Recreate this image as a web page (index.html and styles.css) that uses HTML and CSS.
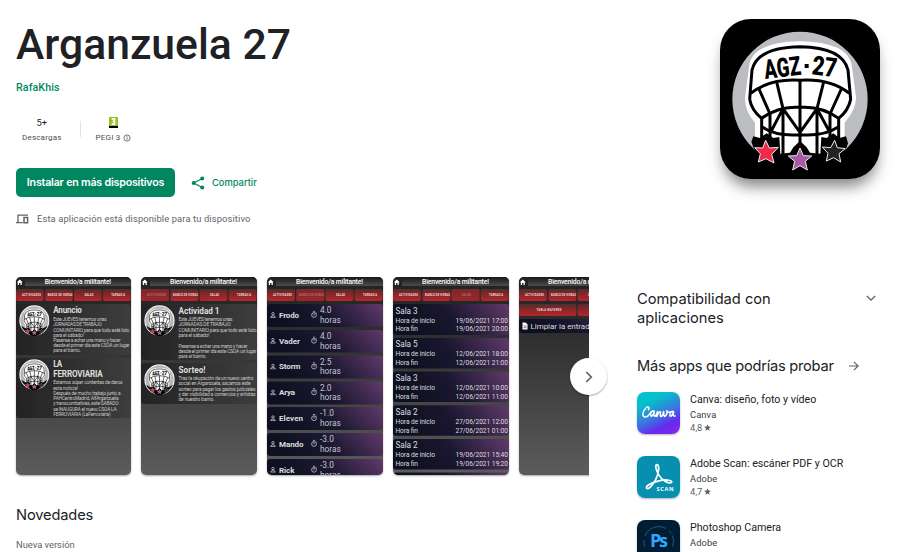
FILE: index.html
```html
<!DOCTYPE html>
<html lang="es">
<head>
<meta charset="utf-8">
<title>Arganzuela 27</title>
<link rel="stylesheet" href="styles.css">
</head>
<body>
<svg class="defs" width="0" height="0" aria-hidden="true">
  <defs>
    <linearGradient id="bg" x1="0" y1="0" x2="0" y2="1"><stop offset="0" stop-color="#222"/><stop offset=".3" stop-color="#2f2f2f"/><stop offset="1" stop-color="#5c5c5c"/></linearGradient>
    <linearGradient id="bar" x1="0" y1="0" x2="0" y2="1"><stop offset="0" stop-color="#191919"/><stop offset="1" stop-color="#4c4c4c"/></linearGradient>
    <linearGradient id="red" x1="0" y1="0" x2="0" y2="1"><stop offset="0" stop-color="#4a3030"/><stop offset=".45" stop-color="#8c2427"/><stop offset="1" stop-color="#b0282c"/></linearGradient>
    <linearGradient id="card" x1="0" y1="0" x2="1" y2="0"><stop offset="0" stop-color="#232323"/><stop offset="1" stop-color="#3d3d3d"/></linearGradient>
    <linearGradient id="night" x1="0" y1=".2" x2="1" y2="0"><stop offset="0" stop-color="#0d1020"/><stop offset=".45" stop-color="#1a1730"/><stop offset="1" stop-color="#613a6b"/></linearGradient>
    <g id="helmet">
      <path fill="#fff" d="M118 165Q128 96 270 94Q412 96 425 165L438 260Q440 295 404 338V400L385 432H155L135 400V338Q100 300 106 255Z"/>
      <path fill="#000" d="M124 395L130 379L150 384L170 370L190 384L208 381L211 431L240 428L250 412L270 393L290 412L300 428L331 431L334 381L350 384L370 370L388 384L408 379L414 400L400 440L300 500H240L140 440Z"/>
      <g fill="none" stroke="#000" stroke-width="9" stroke-linejoin="round">
        <path d="M119 268L126 180Q142 112 270 110Q398 112 414 180L422 268Q415 302 386 325V385M119 268Q125 302 155 325V385"/>
        <path d="M122 250Q180 205 270 211Q360 205 418 250M155 325Q205 287 270 292Q335 287 386 325M155 350Q200 380 270 374Q340 380 386 350"/>
        <path d="M270 211V405M147 237L180 312V392M200 216L219 296V432M341 216L321 296V432M394 237L360 312V392M219 296L180 370M219 296L270 367L321 296L361 370"/>
      </g>
      <g font-family="Roboto" font-weight="900" font-size="80" fill="#000">
        <text x="166" y="207" textLength="110" lengthAdjust="spacingAndGlyphs" transform="rotate(-7 166 207)">AGZ</text>
        <text x="304" y="193" textLength="74" lengthAdjust="spacingAndGlyphs" transform="rotate(7 304 193)">27</text>
      </g>
      <path d="M284 162h12v12h-12z"/>
      <g stroke="#eee" stroke-width="3">
        <path fill="#f0284a" transform="translate(170 428)" d="M-3-37L8-14L35-16L15 5L22 31L-2 18L-25 28L-19 3L-36-15L-12-14Z"/>
        <path fill="#a859a5" d="M270 414L280 437L305 438L286 454L292 480L270 467L248 480L254 454L235 438L260 437Z"/>
        <path fill="#222" d="M374 391L382 413L406 416L387 431L392 456L371 443L349 453L354 430L337 411L362 413Z"/>
      </g>
    </g>
    <symbol id="badge" viewBox="40 37 460 460">
      <circle cx="270" cy="267" r="216" fill="#b5b5b5" stroke="#eee" stroke-width="18"/>
      <path d="M72 345L130 380H410L468 345Q430 460 270 474Q110 460 72 345Z" fill="#161616"/>
      <use href="#helmet"/>
    </symbol>
    <symbol id="top" viewBox="0 0 116 198">
      <rect width="116" height="198" fill="url(#bg)"/>
      <rect width="116" height="9" fill="#222"/>
      <rect x="9" width="107" height="9" fill="url(#bar)"/>
      <path fill="#fff" d="M3.8 2.5L.9 5.2H1.8V8H3.1V6H4.5V8H5.8V5.2H6.7Z"/>
      <text class="shot-title" x="29" y="6.6" textLength="67">Bienvenido/a militante!</text>
      <g fill="url(#red)"><rect y="12" width="28" height="12" rx="2"/><rect x="29.3" y="12" width="28" height="12" rx="2"/><rect x="58.5" y="12" width="28" height="12" rx="2"/><rect x="87.7" y="12" width="28" height="12" rx="2"/></g>
    </symbol>
    <symbol id="tabs" viewBox="0 0 116 198">
      <g class="tab"><text x="6" y="18.6" textLength="19">ACTIVIDADES</text><text x="32" y="18.6" textLength="25">BANCO DE HORAS</text><text x="69" y="18.6" textLength="9">SALAS</text><text x="96" y="18.6" textLength="14">TAREAS/A</text></g>
    </symbol>
    <symbol id="person" viewBox="0 0 6 6"><circle cx="3" cy="1.7" r="1.2" fill="none" stroke="#ddd" stroke-width=".7"/><path d="M.6 5.4Q.8 3.7 3 3.7T5.4 5.4Z" fill="none" stroke="#ddd" stroke-width=".7"/></symbol>
    <symbol id="timer" viewBox="0 0 7 8"><circle cx="3.5" cy="4.5" r="2.4" fill="none" stroke="#ddd" stroke-width=".7"/><path d="M2.4.8H4.6M3.5 2.8V4.8M5.4 2l.7.6" fill="none" stroke="#ddd" stroke-width=".7"/></symbol>
  </defs>
</svg>

<header class="hero">
  <div class="info">
    <h1>Arganzuela 27</h1>
    <div class="dev"><span>RafaKhis</span></div>
    <div class="stats">
      <div class="stat"><div class="val">5+</div><div class="lab descargas">Descargas</div></div>
      <div class="stat rated">
        <div class="val"><svg width="9" height="11" viewBox="0 0 9 11"><path fill="#97c11f" d="M0 0h9v9H0z"/><path d="M0 9h9v2H0z"/><path fill="none" stroke="#fff" stroke-width="1.7" d="M2.7 1.8H5.5V4.4H3.6M5.5 4.4V7.1H2.7"/></svg></div>
        <div class="lab pegi">PEGI 3 <svg width="8" height="8" viewBox="0 0 8 8"><circle cx="4" cy="4" r="3.1" fill="none" stroke="#5f6368" stroke-width=".9"/><path d="M4 3.5v2.1M4 2.1v.8" stroke="#5f6368"/></svg></div>
      </div>
    </div>
    <div class="actions">
      <button class="install">Instalar en más dispositivos</button>
      <a class="share"><svg width="14" height="14" viewBox="0 0 14 14"><path d="M11.2 2.5L2.7 7L11.2 11.5" fill="none" stroke="#01875f" stroke-width="1.3"/><g fill="#01875f"><circle cx="11.2" cy="2.4" r="2"/><circle cx="2.7" cy="7" r="2"/><circle cx="11.2" cy="11.6" r="2"/></g></svg><span>Compartir</span></a>
    </div>
    <div class="device"><svg width="13" height="10" viewBox="0 0 13 10"><g fill="none" stroke="#5f6368"><path stroke-width="1.3" d="M12 1.1H2V8.3M0 8.6H6.8"/><path stroke-width="1.5" d="M8 3.4h3.6v5.3H8z"/></g></svg><span>Esta aplicación está disponible para tu dispositivo</span></div>
  </div>
  <svg class="app-icon" width="160" height="160" viewBox="30 27 480 480">
    <rect x="30" y="27" width="480" height="480"/>
    <path fill="#bcbdc0" d="M128 413A203 203 0 1 1 412 413L400 430H140Z"/>
    <use href="#helmet"/>
  </svg>
</header>

<main class="content">
  <section class="left">
    <div class="carousel">
      <div class="strip">
        <svg class="shot" viewBox="0 0 116 198" preserveAspectRatio="none"><use href="#top"/><use href="#tabs"/>
          <g fill="url(#card)"><rect y="27" width="115.5" height="51" rx="3"/><rect y="81" width="115.5" height="60" rx="3"/></g>
          <use href="#badge" x="3" y="28" width="31" height="31"/><use href="#badge" x="3" y="82" width="31" height="31"/>
          <g class="head"><text x="37.5" y="36.5" textLength="29">Anuncio</text><text x="37.5" y="90.5" textLength="9">LA</text><text x="37.5" y="100" textLength="50">FERROVIARIA</text></g>
          <g class="body"><text x="37.5" y="44" textLength="54">Este JUEVES tenemos unas</text><text x="37.5" y="49.3" textLength="49">JORNADAS DE TRABAJO</text><text x="37.5" y="54.6" textLength="77">COMUNITARIO para que todo esté listo</text><text x="37.5" y="59.9" textLength="31">para el sábado!</text><text x="37.5" y="65.2" textLength="68">Pasense a echar una mano y hacer</text><text x="37.5" y="70.5" textLength="77">desde el primer día este CSOA un lugar</text><text x="37.5" y="75.5" textLength="28">para el barrio.</text>
          <text x="37.5" y="107.3" textLength="70">Estamos súper contentas de daros</text><text x="37.5" y="112.6" textLength="25">esta noticia!</text><text x="37.5" y="117.9" textLength="68">Después de mucho trabajo junto a</text><text x="37.5" y="123.2" textLength="66">PAHCentroMadrid, AlfArganzuela</text><text x="37.5" y="128.5" textLength="66">y transcombativas, este SABADO</text><text x="37.5" y="133.8" textLength="64">se INAUGURA el nuevo CSOA LA</text><text x="37.5" y="139" textLength="58">FERROVIARIA (LaFerroviaria)</text></g>
        </svg>
        <svg class="shot" viewBox="0 0 116 198"><use href="#top"/><use href="#tabs"/><rect class="dim" x="0" y="12" width="28" height="12"/>
          <g fill="url(#card)"><rect y="27" width="116" height="56" rx="3"/><rect y="86" width="116" height="41" rx="3"/></g>
          <use href="#badge" x="3" y="28" width="31" height="31"/><use href="#badge" x="3" y="87" width="31" height="31"/>
          <g class="head"><text x="37.5" y="36.5" textLength="41">Actividad 1</text><text x="37.5" y="96" textLength="27">Sorteo!</text></g>
          <g class="body"><text x="37.5" y="44" textLength="54">Este JUEVES tenemos unas</text><text x="37.5" y="49.3" textLength="52">JORNADAS DE TRABAJO</text><text x="37.5" y="54.6" textLength="78">COMUNITARIO para que todo esté listo</text><text x="37.5" y="59.9" textLength="31">para el sábado!</text><text x="37.5" y="70.5" textLength="69">Pasense a echar una mano y hacer</text><text x="37.5" y="75.7" textLength="78">desde el primer día este CSOA un lugar</text><text x="37.5" y="81" textLength="28">para el barrio.</text>
          <text x="37.5" y="103" textLength="75">Tras la okupación de un nuevo centro</text><text x="37.5" y="108.3" textLength="72">social en Arganzuela, sacamos este</text><text x="37.5" y="113.6" textLength="77">sorteo para pagar los gastos judiciales</text><text x="37.5" y="118.9" textLength="77">y dar visibilidad a comercios y artistas</text><text x="37.5" y="124.2" textLength="36">de nuestro barrio.</text></g>
        </svg>
        <svg class="shot" viewBox="0 0 116 198"><use href="#top"/><use href="#tabs"/><rect class="dim" x="29.3" y="12" width="28" height="12"/>
          <g fill="url(#night)"><rect y="27" width="116" height="23" rx="3"/><rect y="53" width="116" height="22.5" rx="3"/><rect y="78.5" width="116" height="23" rx="3"/><rect y="104.5" width="116" height="23" rx="3"/><rect y="130" width="116" height="23" rx="3"/><rect y="156" width="116" height="23" rx="3"/><rect y="182" width="116" height="23" rx="3"/></g>
          <g class="name"><text x="12" y="40.8" textLength="20">Frodo</text><text x="12" y="66.6" textLength="21">Vader</text><text x="12" y="92.4" textLength="21.5">Storm</text><text x="12" y="118.2" textLength="16">Arya</text><text x="12" y="144" textLength="24">Eleven</text><text x="12" y="169.8" textLength="24.5">Mando</text><text x="12" y="195.6" textLength="15.5">Rick</text></g>
          <g class="hours"><text x="53" y="36.2">4.0</text><text x="53" y="45.7">horas</text><text x="53" y="62">4.0</text><text x="53" y="71.5">horas</text><text x="53" y="87.8">2.5</text><text x="53" y="97.3">horas</text><text x="53" y="113.6">2.0</text><text x="53" y="123.1">horas</text><text x="53" y="139.4">-1.0</text><text x="53" y="148.9">horas</text><text x="53" y="165.2">-3.0</text><text x="53" y="174.7">horas</text><text x="53" y="191">-3.0</text><text x="53" y="200.5">horas</text></g>
          <g><use href="#person" x="3" y="35" width="6" height="6"/><use href="#person" x="3" y="60.8" width="6" height="6"/><use href="#person" x="3" y="86.6" width="6" height="6"/><use href="#person" x="3" y="112.4" width="6" height="6"/><use href="#person" x="3" y="138.2" width="6" height="6"/><use href="#person" x="3" y="164" width="6" height="6"/><use href="#person" x="3" y="189.8" width="6" height="6"/></g>
          <g><use href="#timer" x="43.5" y="33.5" width="7" height="8"/><use href="#timer" x="43.5" y="59.3" width="7" height="8"/><use href="#timer" x="43.5" y="85.1" width="7" height="8"/><use href="#timer" x="43.5" y="110.9" width="7" height="8"/><use href="#timer" x="43.5" y="136.7" width="7" height="8"/><use href="#timer" x="43.5" y="162.5" width="7" height="8"/><use href="#timer" x="43.5" y="188.3" width="7" height="8"/></g>
        </svg>
        <svg class="shot" viewBox="0 0 116 198"><use href="#top"/><use href="#tabs"/><rect class="dim" x="58.5" y="12" width="28" height="12"/>
          <g fill="url(#night)"><rect y="27" width="116" height="31" rx="3"/><rect y="61" width="116" height="30.5" rx="3"/><rect y="94.5" width="116" height="30.5" rx="3"/><rect y="128.3" width="116" height="30.5" rx="3"/><rect y="162" width="116" height="30.5" rx="3"/><rect y="195.5" width="116" height="30" rx="3"/></g>
          <g class="room"><text x="2.5" y="36.5" textLength="22">Sala 3</text><text x="2.5" y="70.2" textLength="22">Sala 5</text><text x="2.5" y="104" textLength="22">Sala 3</text><text x="2.5" y="137.7" textLength="22">Sala 2</text><text x="2.5" y="171.4" textLength="22">Sala 2</text></g>
          <g class="when"><text x="2.5" y="45.5" textLength="39.5">Hora de inicio</text><text x="2.5" y="54.3" textLength="22.5">Hora fin</text><text x="2.5" y="79.2" textLength="39.5">Hora de inicio</text><text x="2.5" y="88" textLength="22.5">Hora fin</text><text x="2.5" y="113" textLength="39.5">Hora de inicio</text><text x="2.5" y="121.8" textLength="22.5">Hora fin</text><text x="2.5" y="146.7" textLength="39.5">Hora de inicio</text><text x="2.5" y="155.5" textLength="22.5">Hora fin</text><text x="2.5" y="180.4" textLength="39.5">Hora de inicio</text><text x="2.5" y="189.2" textLength="22.5">Hora fin</text>
          <text x="62.5" y="45.5" textLength="52.5">19/06/2021 17:00</text><text x="62.5" y="54.3" textLength="52.5">19/06/2021 20:00</text><text x="62.5" y="79.2" textLength="52.5">12/06/2021 18:00</text><text x="62.5" y="88" textLength="52.5">12/06/2021 21:00</text><text x="62.5" y="113" textLength="52.5">12/06/2021 10:00</text><text x="62.5" y="121.8" textLength="52.5">12/06/2021 11:00</text><text x="62.5" y="146.7" textLength="52.5">27/06/2021 12:00</text><text x="62.5" y="155.5" textLength="52.5">27/06/2021 01:00</text><text x="62.5" y="180.4" textLength="52.5">19/06/2021 15:40</text><text x="62.5" y="189.2" textLength="52.5">19/06/2021 19:20</text></g>
        </svg>
        <svg class="shot" viewBox="0 0 116 198"><use href="#top"/><use href="#tabs"/>
          <g fill="url(#red)"><rect y="27" width="57.5" height="12" rx="2"/><rect x="58.7" y="27" width="57.5" height="12" rx="2"/></g>
          <text class="tab" x="17.5" y="33.6" textLength="25">TABLA MAYORES</text>
          <rect y="42" width="116" height="14" rx="3" fill="url(#night)"/>
          <path fill="#fff" d="M3.5 45.5H6.5L8.5 47.5V52.5H3.5Z"/><path d="M4.5 49h3M4.5 50.7h3" stroke="#222" stroke-width=".6"/>
          <text class="clean" x="11.5" y="51.8" textLength="63.5">Limpiar la entrada</text>
        </svg>
      </div>
      <button class="next" aria-label="Siguiente"><svg width="10" height="12" viewBox="0 0 10 12"><path d="M2.3 1.2L7.3 6L2.3 10.8" fill="none" stroke="#5f6368" stroke-width="1.6"/></svg></button>
    </div>
    <h2 class="news">Novedades</h2>
    <p class="version">Nueva versión</p>
  </section>
  <aside class="side">
    <div class="compat"><h2>Compatibilidad con<br>aplicaciones</h2><svg width="10" height="7" viewBox="0 0 10 7"><path d="M.8 1L5 5.2L9.2 1" fill="none" stroke="#5f6368" stroke-width="1.3"/></svg></div>
    <div class="more"><h2>Más apps que podrías probar</h2><svg width="10" height="10" viewBox="0 0 10 10"><path d="M0 5H9M4.9 .8L9.1 5L4.9 9.2" fill="none" stroke="#5f6368" stroke-width="1.2"/></svg></div>
    <div class="app">
      <svg class="thumb" width="43" height="42" viewBox="0 0 43 42"><defs><linearGradient id="cv" x1=".25" y1="0" x2=".75" y2="1"><stop offset=".2" stop-color="#04bfcc"/><stop offset=".55" stop-color="#3a78e0"/><stop offset=".8" stop-color="#642bf0"/><stop offset="1" stop-color="#7d2ae8"/></linearGradient></defs><path fill="url(#cv)" d="M0 0h43v42H0z"/><g fill="none" stroke="#fff" stroke-width="1.5" stroke-linecap="round" stroke-linejoin="round"><path d="M11.5 17.7C12.8 14.7 10.7 14.5 8.8 16.2C6 18.6 4.5 24 7.6 24.9C9.5 25.4 11.6 23.8 12.6 22.2C13.6 19 16.8 18.4 17.2 19.4C15 18 12.7 22 13.9 24C15.2 25.2 16.8 21.5 17.3 19.6C16.8 22 16.6 24.4 18 24.3C19 24 20 21 20.5 19.5L19.8 24.6C20.7 21.7 22.3 19.1 23.4 19.8C24 20.5 22.3 24 23.8 24.4C25.3 24.5 26.2 21.6 26.6 19.5C26.8 21 26.5 24 27.5 24.4C29.2 24 30.8 20.7 29.8 18.7C30 20.5 31.8 20.5 33 19.8"/><path d="M36.5 19.7C34.4 18.4 32 22 33 24C34.3 25.2 36.2 21.5 36.6 19.7C36 22.5 36 24.6 38.2 24"/></g></svg>
      <div class="meta"><div class="name-line">Canva: diseño, foto y vídeo</div><div class="by">Canva</div><div class="rate"><span>4,8</span><svg width="7" height="7" viewBox="0 0 8 8"><path fill="#5f6368" d="M4 .2L5.1 2.8L7.9 3L5.8 4.9L6.4 7.6L4 6.2L1.6 7.6L2.2 4.9L.1 3L2.9 2.8Z"/></svg></div></div>
    </div>
    <div class="app">
      <svg class="thumb" width="43" height="42" viewBox="0 0 43 42"><path fill="#068faf" d="M0 0h43v42H0z"/><path fill="none" stroke="#fff" stroke-width="1.7" d="M19.8 8.6C17.6 9.2 19.2 15 22.2 19.6C25.4 24.7 31.6 28.1 34.5 26.6C36 24.7 29.5 23 22.8 24.6C15.3 26.2 8.6 29.7 9.5 32.1C11.5 34.5 16.8 27.8 19.2 22.4C21.8 17 22.9 8.4 19.8 8.6Z"/><text x="19.6" y="35.4" textLength="17" class="scan">SCAN</text></svg>
      <div class="meta"><div class="name-line">Adobe Scan: escáner PDF y OCR</div><div class="by">Adobe</div><div class="rate"><span>4,7</span><svg width="7" height="7" viewBox="0 0 8 8"><path fill="#5f6368" d="M4 .2L5.1 2.8L7.9 3L5.8 4.9L6.4 7.6L4 6.2L1.6 7.6L2.2 4.9L.1 3L2.9 2.8Z"/></svg></div></div>
    </div>
    <div class="app">
      <svg class="thumb" width="43" height="42" viewBox="0 0 43 42"><path fill="#001d34" d="M0 0h43v42H0z"/><g fill="none" stroke="#1f6da0" stroke-width=".8"><path d="M8 16A14.6 14.6 0 0 1 29 8.6M35.5 15.5A14.6 14.6 0 0 1 35.5 26.5M7.5 26.5A14.6 14.6 0 0 1 7 20M32 10.8A14.6 14.6 0 0 1 34.5 13.4"/></g><text x="13" y="26.5" textLength="18" class="ps">Ps</text></svg>
      <div class="meta"><div class="name-line">Photoshop Camera</div><div class="by">Adobe</div></div>
    </div>
  </aside>
</main>
</body>
</html>
```
FILE: styles.css
```css
* { box-sizing: border-box; margin: 0; padding: 0; }
html { overflow: hidden; }
body { width: 919px; height: 552px; overflow: hidden; background: #fff; color: #202124; font-family: Roboto, sans-serif; }
button { border: 0; font: inherit; }
svg { display: block; flex: none; }
.defs { position: absolute; }

.hero { display: flex; justify-content: space-between; height: 277px; padding: 19px 39px 0 16px; }
.info { padding-top: 1px; }
h1 { font-size: 42.67px; line-height: 48px; font-weight: 500; white-space: nowrap; }
.dev { margin-top: 12px; font-size: 10.67px; line-height: 16px; font-weight: 500; color: #01875f; letter-spacing: .1px; }
.stats { display: flex; align-items: center; margin-top: 19px; height: 29px; }
.stat { padding: 0 18px 0 6px; text-align: center; }
.rated { position: relative; padding-left: 16px; }
.rated::before { content: ""; position: absolute; left: 0; top: 6px; width: 1px; height: 16px; background: #e0e2e6; }
.val { display: flex; justify-content: center; align-items: center; height: 15px; font-size: 9.33px; font-weight: 400; }
.lab { display: flex; align-items: center; justify-content: center; gap: 3px; font-size: 8px; line-height: 14px; color: #4d5156; letter-spacing: .2px; white-space: nowrap; }
.lab.pegi { position: relative; top: 1px; }
.descargas { position: relative; top: 1px; }
.actions { display: flex; align-items: center; margin-top: 24px; }
.install { width: 159px; height: 29px; border-radius: 5px; background: #01875f; color: #fff; font: 600 10.67px/29px Inter, sans-serif; letter-spacing: -.2px; white-space: nowrap; }
.share { display: flex; align-items: center; gap: 7px; margin-left: 16px; color: #01875f; font: 500 9.33px/16px Inter, sans-serif; }
.device { display: flex; align-items: center; gap: 8px; margin-top: 14px; font-size: 9.33px; line-height: 16px; color: #5f6368; letter-spacing: .13px; }
.app-icon { border-radius: 31px; box-shadow: 0 11px 15px -4px rgba(0, 0, 0, .5); }

.content { display: grid; grid-template-columns: 573px 243px; column-gap: 48px; height: 275px; overflow: hidden; padding-left: 16px; }
.carousel { position: relative; }
.strip { display: flex; gap: 10px; height: 203px; overflow: hidden; margin-left: -3px; padding-left: 3px; }
.shot { width: 116px; height: 198px; border-radius: 5px; box-shadow: 0 1px 2px rgba(0, 0, 0, .35); }
.shot:first-child { width: 115px; }
.next { position: absolute; left: 554px; top: 81px; width: 37px; height: 37px; border-radius: 50%; background: #fff; display: flex; align-items: center; justify-content: center; box-shadow: 0 1px 2px rgba(0, 0, 0, .35); }
.shot-title { font-size: 6.8px; font-weight: 500; fill: #fff; }
.tab { font-size: 2.7px; font-weight: 700; fill: #f5dede; }
.dim { fill: #8e282c; opacity: .65; }
.head { font-size: 8.2px; font-weight: 700; fill: #ddd; }
.body { font-size: 4.9px; fill: #c8c8c8; }
.name { font-size: 8px; font-weight: 700; fill: #ddd; }
.hours { font-size: 8.3px; fill: #c5c5cf; }
.room { font-size: 8.2px; fill: #ddd; }
.when { font-size: 6.6px; fill: #ddd; }
.clean { font-size: 8px; fill: #ddd; }
.scan { font: 700 5.6px "Open Sans", sans-serif; fill: #fff; }
.ps { font: 700 18px "Open Sans", sans-serif; fill: #31a8ff; }

h2 { font: 400 14.67px/19px Inter, sans-serif; white-space: nowrap; }
.news { margin-top: 26px; letter-spacing: -.15px; }
.version { margin-top: 12px; font-size: 9.33px; line-height: 16px; color: #5f6368; }

.side { padding-top: 13px; }
.compat { display: flex; justify-content: space-between; padding-right: 4px; }
.compat > svg { margin-top: 5px; }
.more { display: flex; align-items: center; gap: 15px; margin-top: 29px; }
.more h2 { letter-spacing: -.26px; }
.more svg { margin-top: -2px; }
.app { display: flex; gap: 10px; height: 64px; }
.more + .app { margin-top: 16px; }
.thumb { border-radius: 8px; box-shadow: 0 1px 2px rgba(0, 0, 0, .3); }
.name-line { font-size: 10.67px; line-height: 15px; white-space: nowrap; }
.by { font-size: 9.33px; line-height: 14px; margin-top: 1px; letter-spacing: .1px; color: #3c4043; }
.rate { display: flex; align-items: center; gap: 2px; margin-top: -1px; font-size: 9.33px; line-height: 13px; color: #5f6368; }
```
